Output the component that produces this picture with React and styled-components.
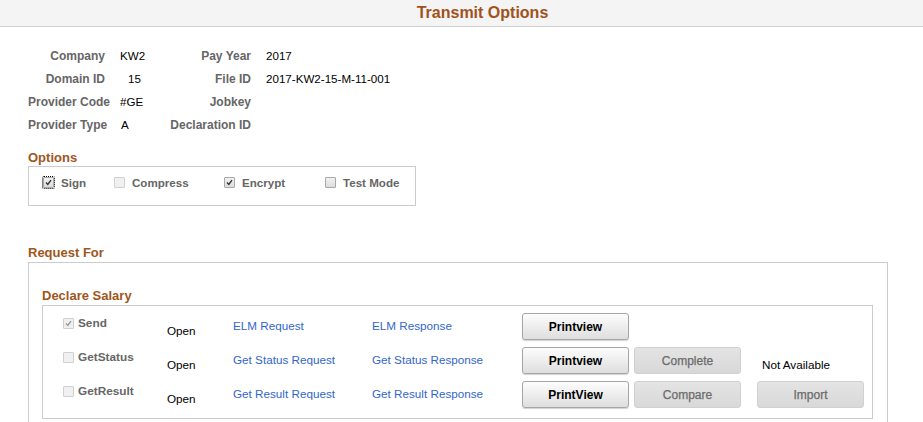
import React from 'react';
import styled, { createGlobalStyle, css } from 'styled-components';

const GlobalStyle = createGlobalStyle`
  html, body {
    margin: 0;
    padding: 0;
    background: #ffffff;
    font-family: "Liberation Sans", Arial, sans-serif;
    font-size: 12px;
    color: #000;
  }
`;

const Page = styled.div`
  width: 923px;
  height: 422px;
  overflow: hidden;
`;

const Header = styled.div`
  height: 26px;
  background: #f4f4f4;
  border-bottom: 1px solid #cfcfcf;
  display: flex;
  align-items: center;
  justify-content: center;
`;

const Title = styled.h1`
  margin: 0;
  font-size: 16px;
  font-weight: bold;
  color: #a0521c;
  padding-left: 42px;
`;

const Content = styled.div`
  padding: 17px 0 0 28px;
`;

const InfoGrid = styled.div`
  display: grid;
  grid-template-columns: 77px 20px 96px auto;
  column-gap: 15px;
  grid-auto-rows: 23px;
  align-items: center;
`;

const Label = styled.div`
  font-weight: bold;
  color: #666;
  text-align: right;
  white-space: nowrap;
`;

const Value = styled.div`
  color: #000;
  font-size: 11.6px;
  white-space: nowrap;
  padding-left: ${({ indent }) => indent || 0}px;
`;

const SectionTitle = styled.h2`
  margin: 0;
  font-size: 13px;
  line-height: 16px;
  font-weight: bold;
  color: #a0561b;
`;

const OptionsTitle = styled(SectionTitle)`
  margin-top: 14px;
`;

const OptionsBox = styled.div`
  width: 388px;
  height: 40px;
  box-sizing: border-box;
  border: 1px solid #cccccc;
  display: grid;
  grid-template-columns: 71px 110px 101px auto;
  padding-left: 14px;
  padding-top: 8px;
  align-content: start;
`;

const CheckItem = styled.label`
  display: flex;
  align-items: center;
  gap: 7px;
  font-weight: bold;
  font-size: 11.6px;
  color: #666;
  white-space: nowrap;
  height: 14px;
`;

const Box = styled.span`
  width: 9px;
  height: 9px;
  border: 1px solid ${({ disabled }) => (disabled ? '#d0d0d0' : '#a8a8a8')};
  border-radius: 1px;
  background: ${({ disabled }) =>
    disabled ? '#f0f0f0' : 'linear-gradient(#f2f2f2, #dcdcdc)'};
  display: inline-flex;
  align-items: center;
  justify-content: center;
  flex-shrink: 0;
  ${({ focused }) =>
    focused &&
    css`
      outline: 1px dotted #000;
      outline-offset: 0px;
    `}
`;

const Check = ({ checked, disabled, focused }) => (
  <Box disabled={disabled} focused={focused}>
    {checked && (
      <svg width="7" height="7" viewBox="0 0 7 7">
        <path
          d="M1 3.6 L2.8 5.4 L6 1.2"
          fill="none"
          stroke={disabled ? '#9a9a9a' : '#333'}
          strokeWidth="1.4"
        />
      </svg>
    )}
  </Box>
);

const RequestTitle = styled(SectionTitle)`
  margin-top: 39px;
  margin-bottom: 1px;
`;

const RequestBox = styled.div`
  width: 860px;
  height: 180px;
  border: 1px solid #cccccc;
  border-bottom: none;
  padding: 25px 0 0 13px;
  box-sizing: border-box;
`;

const SubTitle = styled(SectionTitle)`
  margin-bottom: 1px;
`;

const InnerBox = styled.div`
  width: 831px;
  height: 114px;
  border: 1px solid #cccccc;
  box-sizing: border-box;
  padding: 7px 0 0 20px;
  display: flex;
  flex-direction: column;
  gap: 7px;
`;

const ActionRow = styled.div`
  display: grid;
  grid-template-columns: 104px 66px 139px 150px 112px 123px auto;
  height: 27px;
`;

const StepLabel = styled.div`
  display: flex;
  align-items: center;
  gap: 4px;
  align-self: start;
  margin-top: 3px;
  font-weight: bold;
  font-size: 11.8px;
  color: #666;
  white-space: nowrap;
`;

const StatusText = styled.div`
  align-self: end;
  margin-bottom: 3px;
  font-size: 11.7px;
  white-space: nowrap;
  padding-left: ${({ indent }) => indent || 0}px;
`;

const Link = styled.a`
  align-self: center;
  color: #3366cc;
  font-size: 11.7px;
  text-decoration: none;
  white-space: nowrap;
  margin-top: -2px;
  cursor: pointer;
`;

const Button = styled.button`
  width: 107px;
  height: 27px;
  box-sizing: border-box;
  border-radius: 3px;
  font-family: "Liberation Sans", Arial, sans-serif;
  font-size: 12px;
  padding: 0;
  ${({ disabled }) =>
    disabled
      ? css`
          background: linear-gradient(#e4e4e4, #d8d8d8);
          border: 1px solid #d0d0d0;
          color: #6b6b6b;
          font-weight: normal;
          -webkit-text-stroke: 0.25px #6b6b6b;
        `
      : css`
          background: linear-gradient(#fdfdfd, #dedede);
          border: 1px solid #a6a6a6;
          box-shadow: 0 1px 1px rgba(0, 0, 0, 0.18);
          color: #000;
          font-weight: bold;
        `}
`;

const info = [
  ['Company', 'KW2', 0, 'Pay Year', '2017'],
  ['Domain ID', '15', 8, 'File ID', '2017-KW2-15-M-11-001'],
  ['Provider Code', '#GE', 0, 'Jobkey', ''],
  ['Provider Type', 'A', 1, 'Declaration ID', ''],
];

const options = [
  { label: 'Sign', checked: true, focused: true },
  { label: 'Compress', checked: false, disabled: true },
  { label: 'Encrypt', checked: true },
  { label: 'Test Mode', checked: false },
];

const App = () => (
  <Page>
    <GlobalStyle />
    <Header>
      <Title>Transmit Options</Title>
    </Header>
    <Content>
      <InfoGrid>
        {info.map(([l1, v1, ind, l2, v2]) => (
          <React.Fragment key={l1}>
            <Label>{l1}</Label>
            <Value indent={ind}>{v1}</Value>
            <Label>{l2}</Label>
            <Value>{v2}</Value>
          </React.Fragment>
        ))}
      </InfoGrid>

      <OptionsTitle>Options</OptionsTitle>
      <OptionsBox>
        {options.map((o) => (
          <CheckItem key={o.label}>
            <Check checked={o.checked} disabled={o.disabled} focused={o.focused} />
            {o.label}
          </CheckItem>
        ))}
      </OptionsBox>

      <RequestTitle>Request For</RequestTitle>
      <RequestBox>
        <SubTitle>Declare Salary</SubTitle>
        <InnerBox>
          <ActionRow>
            <StepLabel>
              <Check checked disabled />
              Send
            </StepLabel>
            <StatusText>Open</StatusText>
            <Link>ELM Request</Link>
            <Link>ELM Response</Link>
            <Button>Printview</Button>
          </ActionRow>
          <ActionRow>
            <StepLabel>
              <Check disabled />
              GetStatus
            </StepLabel>
            <StatusText>Open</StatusText>
            <Link>Get Status Request</Link>
            <Link>Get Status Response</Link>
            <Button>Printview</Button>
            <Button disabled>Complete</Button>
            <StatusText indent={5}>Not Available</StatusText>
          </ActionRow>
          <ActionRow>
            <StepLabel>
              <Check disabled />
              GetResult
            </StepLabel>
            <StatusText>Open</StatusText>
            <Link>Get Result Request</Link>
            <Link>Get Result Response</Link>
            <Button>PrintView</Button>
            <Button disabled>Compare</Button>
            <Button disabled>Import</Button>
          </ActionRow>
        </InnerBox>
      </RequestBox>
    </Content>
  </Page>
);

export default App;
